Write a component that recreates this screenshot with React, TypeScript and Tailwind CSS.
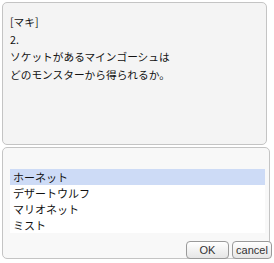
export default function App() {
  const items = ["ホーネット", "デザートウルフ", "マリオネット", "ミスト"];
  const jp = { fontFamily: '"Noto Sans CJK JP", "Liberation Sans", sans-serif' };

  return (
    <div className="w-[274px] h-[263px] bg-white overflow-hidden pt-[2px] pl-[2px]" style={jp}>
      <div className="w-[265px] h-[143px] border border-[#c4c4c4] rounded-[5px] bg-[#f4f4f4] pt-[10px] pl-[7px] text-[10.7px] leading-[17.7px] text-[#111]">
        <div>[マキ]</div>
        <div>2.</div>
        <div>ソケットがあるマインゴーシュは</div>
        <div>どのモンスターから得られるか。</div>
      </div>
      <div className="mt-[2px] w-[268px] h-[112px] border border-[#c4c4c4] rounded-[5px] bg-[#f8f8f8] flex flex-col">
        <div className="mt-[21px] ml-[7px] mr-[4px] bg-white text-[11px] text-[#111]">
          {items.map((it, i) => (
            <div
              key={it}
              className={
                "h-[16px] leading-[16px] pl-[3px] " + (i === 0 ? "bg-[#cddbf6]" : "")
              }
            >
              {it}
            </div>
          ))}
        </div>
        <div className="mt-auto flex justify-end gap-[3px] mb-[-1px]">
          <button className="w-[43px] h-[18px] border border-[#9a9a9a] rounded-[4px] bg-gradient-to-b from-white to-[#e6e6e6] text-[11px] leading-[16px] text-[#333] font-['Liberation_Sans']">
            OK
          </button>
          <button className="w-[40px] h-[18px] border border-[#9a9a9a] rounded-[4px] bg-gradient-to-b from-white to-[#e6e6e6] text-[11px] leading-[16px] text-[#333] font-['Liberation_Sans'] mr-[-3px]">
            cancel
          </button>
        </div>
      </div>
    </div>
  );
}
